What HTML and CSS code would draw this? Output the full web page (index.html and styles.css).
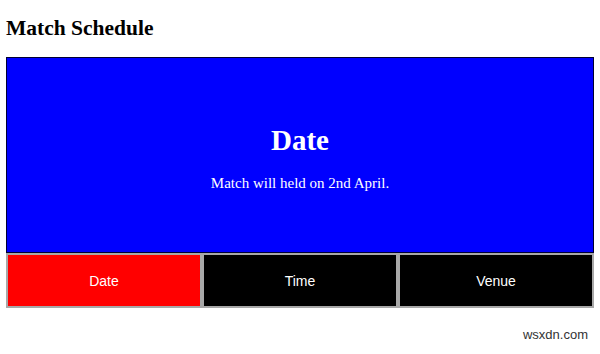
FILE: index.html
```html
<!DOCTYPE html>
<html lang="en">
<head>
    <meta charset="UTF-8">
    <meta name="viewport" content="width=device-width, initial-scale=1.0">
    <title>Match Schedule</title>
    <link rel="stylesheet" href="styles.css">
</head>
<body>

    <h2 class="titulo">Match Schedule</h2>

    <div class="conteudo">
        <h1>Date</h1>
        <p>Match will held on 2nd April.</p>
    </div>

    <div class="abas">
        <button class="aba ativa">Date</button>
        <button class="aba">Time</button>
        <button class="aba">Venue</button>
    </div>

    <div class="marca">wsxdn.com</div>

</body>
</html>
```

FILE: styles.css
```css
body {
    font-family: "Liberation Serif", serif;
    margin: 0;
    padding: 0 6px;
}

.titulo {
    font-size: 21.5px;
    font-weight: bold;
    margin: 0;
    padding-top: 16px;
    height: 57px;
    box-sizing: border-box;
}

.conteudo {
    background-color: #0000ff;
    color: white;
    border: 1px solid #000033;
    height: 196px;
    box-sizing: border-box;
    text-align: center;
    padding-top: 66px;
}

.conteudo h1 {
    font-size: 29px;
    margin: 0;
}

.conteudo p {
    font-size: 15px;
    margin: 18px 0 0;
}

.abas {
    display: flex;
}

.aba {
    flex: 1;
    height: 55px;
    background-color: black;
    color: white;
    border: 2px solid #a8a8a8;
    font-family: "Liberation Sans", sans-serif;
    font-size: 14px;
    cursor: pointer;
}

.aba.ativa {
    background-color: red;
}

.marca {
    text-align: right;
    font-family: "Liberation Sans", sans-serif;
    font-size: 13px;
    color: #333;
    margin-top: 19px;
    padding-right: 6px;
}
```
